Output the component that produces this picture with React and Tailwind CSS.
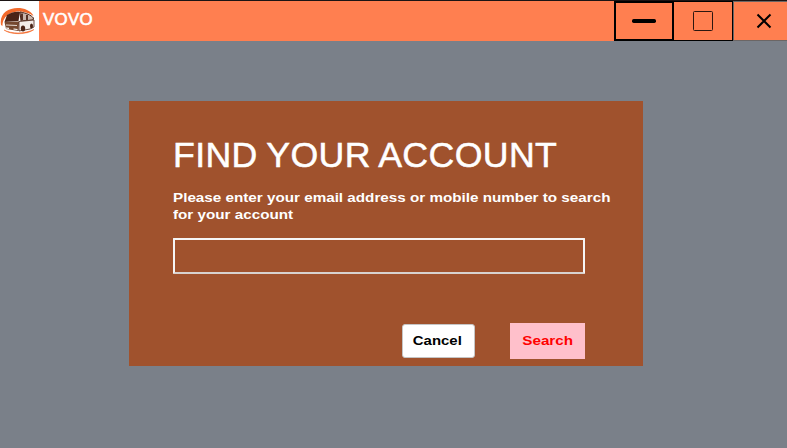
function BusLogo() {
  return (
    <svg viewBox="0 0 39 40" className="h-10 w-[39px] shrink-0 bg-white" fill="none">
      <path d="M1 24C-1 12 9 6 20 7C27 8 32 11 33.5 15C27 10.500 18 9 11 12C5 15 2.500 19 2.500 25Z" fill="#f26a2c" />
      <path d="M7 14C11 11 17 10 20 11L18.500 20L4.500 21Z" fill="#4b2417" />
      <path d="M20 11C26 12 31 14 33.500 17L33 19L21 20Z" fill="#c9b5ab" stroke="#4b2417" strokeWidth="1" />
      <path d="M22 12.500V19M27 14V19" stroke="#4b2417" strokeWidth="1.800" />
      <path d="M4.500 21L19 20.500L18.500 30L6 28Z" fill="#75482f" />
      <path d="M19 20.500L34 19L34 26L30 28L19 30Z" fill="#f3ece8" stroke="#4b2417" strokeWidth=".8" />
      <path d="M6 24L17 24.500" stroke="#e4d8d1" strokeWidth="1.200" />
      <path d="M6 27L9 27.400M13.500 28L17.500 28.500" stroke="#fff" strokeWidth="1.200" />
      <ellipse cx="23" cy="27.500" rx="2.200" ry="3" fill="#4b2417" />
      <ellipse cx="31.500" cy="25" rx="1.500" ry="2.500" fill="#4b2417" />
      <path d="M4 29C12 33 24 33 34 28.500C28 34 10 34 4 29Z" fill="#f26a2c" stroke="#f26a2c" strokeWidth=".5" />
    </svg>
  );
}

function TitleBar() {
  return (
    <header className="flex h-[41px] border-t border-[#1c1414] bg-[#ff7f50]">
      <BusLogo />
      <span className="ml-1 origin-left scale-x-[1.05] pt-[7px] text-base tracking-[0.3px] text-white [-webkit-text-stroke:0.6px_white]">VOVO</span>
      <div className="ml-auto flex">
        <button aria-label="Minimize" className="flex w-[60px] items-center justify-center border-2 border-black">
          <svg width="24" height="4"><rect width="24" height="4" rx="1.7" fill="#000" /></svg>
        </button>
        <button aria-label="Maximize" className="flex w-[59px] items-center justify-center border-y border-r border-black">
          <svg width="20" height="20" fill="none"><rect x=".5" y=".5" width="19" height="19" rx="1" stroke="#2c1710" /></svg>
        </button>
        <button aria-label="Close" className="flex w-[54px] items-center justify-center border-y border-l border-[#6b6665] pl-[7px]">
          <svg width="16" height="16"><path d="M1.5 1.5L14.5 14.5M14.5 1.5L1.5 14.5" stroke="#000" strokeWidth="2" /></svg>
        </button>
      </div>
    </header>
  );
}

export default function App() {
  return (
    <div className="h-[448px] w-[787px] overflow-hidden bg-[#7a8089] font-['Liberation_Sans',Arial,sans-serif]">
      <TitleBar />
      <main className="mt-[60px] ml-[129px] h-[265px] w-[514px] bg-[#a0522d] pt-[33px] pl-11">
        <h1 className="w-max origin-left scale-x-[1.02] text-[35px] leading-[42px] tracking-[0.35px] [word-spacing:-1px] whitespace-nowrap text-white [-webkit-text-stroke:0.5px_white]">FIND YOUR ACCOUNT</h1>
        <p className="mt-[13px] w-max origin-left scale-x-[1.12] text-[13.6px] leading-[17px] font-bold whitespace-nowrap text-white">
          Please enter your email address or mobile number to search<br />for your account
        </p>
        <input aria-label="Email address or mobile number" className="mt-[15px] block h-[36px] w-[412px] rounded-[1px] border-2 border-[#f5f5f5] border-b-[#d8d2cf] bg-transparent px-2 text-white outline-none" />
        <div className="mt-[49px] flex w-[412px] items-center justify-end gap-[35px] text-[13.6px] font-bold">
          <button className="h-[34px] w-[73px] rounded-[3px] border border-[#c5c5c5] bg-white pr-0.5 text-black">
            <span className="inline-block scale-x-[1.1]">Cancel</span>
          </button>
          <button className="h-9 w-[75px] bg-[#ffc0cb] text-[#ff0000]">
            <span className="inline-block scale-x-[1.12]">Search</span>
          </button>
        </div>
      </main>
    </div>
  );
}
